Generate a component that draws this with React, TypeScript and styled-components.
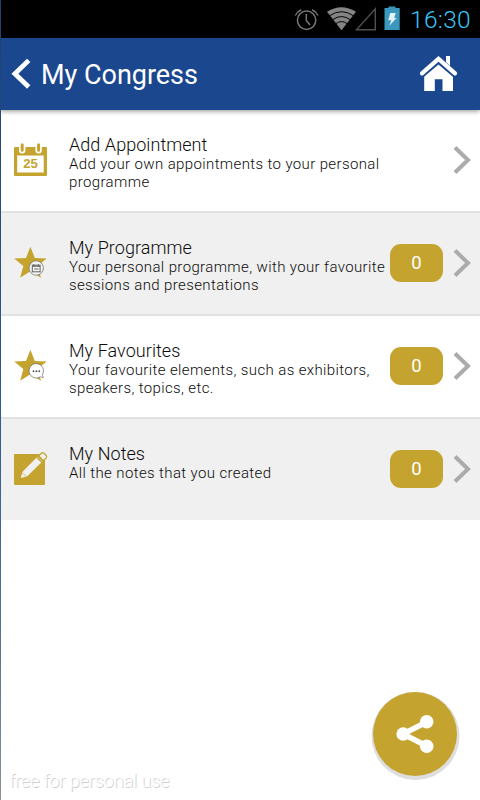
import React from "react";
import styled, { createGlobalStyle } from "styled-components";

const GOLD = "#c4a42e";
const BLUE = "#1b478f";

const GlobalStyle = createGlobalStyle`
  body { margin: 0; background: #fff; }
  * { box-sizing: border-box; }
`;

const Screen = styled.div`
  position: relative;
  width: 480px;
  height: 800px;
  overflow: hidden;
  display: flex;
  flex-direction: column;
  background: #fff;
  font-family: Roboto, "Noto Sans", sans-serif;
  color: #333;
`;

const EdgeLine = styled.div`
  position: absolute;
  left: 0;
  top: 0;
  width: 1px;
  height: 800px;
  background: linear-gradient(#20406f, #2d5a92 50%, #547492 80%, #8a9297);
  z-index: 2;
`;

const StatusBar = styled.div`
  flex: none;
  height: 38px;
  background: #000;
  display: flex;
  justify-content: flex-end;
  padding-right: 9px;
`;

const StatusIcons = styled.svg`
  width: 108px;
  height: 38px;
  margin-right: 8px;
`;

const Clock = styled.span`
  width: 61px;
  font-size: 24.5px;
  font-weight: 300;
  letter-spacing: 0.3px;
  line-height: 40px;
  white-space: nowrap;
  color: #3bc4f5;
`;

const Header = styled.header`
  flex: none;
  height: 72px;
  background: ${BLUE};
  box-shadow: 0 1px 5px rgba(0, 0, 0, 0.45);
  z-index: 1;
  display: flex;
  align-items: center;
  padding: 0 20px 0 11px;
`;

const BackIcon = styled.svg`
  width: 22px;
  height: 34px;
  margin-right: 8px;
`;

const HeaderTitle = styled.h1`
  flex: 1;
  margin: 0;
  font-size: 27px;
  font-weight: 400;
  line-height: 72px;
  padding-top: 2px;
  letter-spacing: -0.02px;
  white-space: nowrap;
  color: #fff;
`;

const HomeIcon = styled.svg`
  width: 42px;
  height: 40px;
`;

const List = styled.main`
  display: flex;
  flex-direction: column;
`;

const Row = styled.div<{ $shaded?: boolean; $last?: boolean }>`
  height: ${(p) => (p.$last ? 101 : 103)}px;
  display: flex;
  background: ${(p) => (p.$shaded ? "#f0f0f0" : "#fff")};
  border-bottom: ${(p) => (p.$last ? "none" : "2px solid #e2e2e2")};
  padding: 24px 8px 0 10px;
`;

const RowIcon = styled.svg`
  flex: none;
  width: 40px;
  height: 50px;
  margin-right: 19px;
`;

const RowText = styled.div`
  flex: none;
  width: 321px;
  white-space: nowrap;
`;

const RowTitle = styled.div`
  font-size: 18px;
  font-weight: 300;
  line-height: 21px;
  letter-spacing: 0.05px;
  color: #0c0c0c;
`;

const RowDescription = styled.div`
  font-size: 15px;
  font-weight: 300;
  line-height: 18px;
  letter-spacing: 0.38px;
  white-space: pre;
  color: #0c0c0c;
`;

const Badge = styled.div<{ $hidden?: boolean }>`
  flex: none;
  width: 53px;
  height: 38px;
  margin-top: 7px;
  border-radius: 11px;
  background: ${GOLD};
  color: #fff;
  font-size: 18.5px;
  line-height: 39px;
  text-align: center;
  visibility: ${(p) => (p.$hidden ? "hidden" : "visible")};
`;

const Chevron = styled.svg`
  flex: none;
  width: 20px;
  height: 30px;
  margin: 11px 0 0 9px;
`;

const ShareButton = styled.button`
  position: absolute;
  left: 373px;
  top: 692px;
  width: 84px;
  height: 84px;
  padding: 0;
  border: 0;
  border-radius: 50%;
  background: ${GOLD};
  box-shadow: 0.5px 2px 0 2px #dedede;
`;

const ShareIcon = styled.svg`
  display: block;
  width: 84px;
  height: 84px;
`;

const Watermark = styled.div`
  position: absolute;
  left: 9px;
  top: 769px;
  font-size: 18.5px;
  font-weight: 300;
  line-height: 24px;
  letter-spacing: -0.32px;
  white-space: nowrap;
  color: #fff;
  text-shadow: 1px 1px 0 #cfcfcf;
`;

const STAR =
  "M20.4 6.8 L24.8 18 L36.7 18.5 L27.5 26 L31 37.8 L20.4 31.2 L10.2 37.8 L13.3 26 L4.2 18.5 L16 18 Z";

const CalendarIcon = () => (
  <RowIcon viewBox="0 0 40 50">
    <path
      fill={GOLD}
      fillRule="evenodd"
      d="M5 13H36Q37 13 37 14V41Q37 42 36 42H5Q4 42 4 41V14Q4 13 5 13ZM7.2 21.5V38.6H33.7V21.5Z"
    />
    <path d="M12.2 11V16.3M28.6 11V16.3" stroke="#fff" strokeWidth="6.4" strokeLinecap="round" />
    <path d="M12.2 10.8V16.3M28.6 10.8V16.3" stroke={GOLD} strokeWidth="3" strokeLinecap="round" />
    <text
      x="20.5"
      y="34.4"
      textAnchor="middle"
      fill={GOLD}
      fontFamily="Liberation Sans, sans-serif"
      fontSize="13.2"
      fontWeight="700"
    >
      25
    </text>
  </RowIcon>
);

const ProgrammeIcon = () => (
  <RowIcon viewBox="0 0 40 50">
    <path d={STAR} transform="translate(0 3)" fill={GOLD} />
    <circle cx="26.2" cy="31" r="7.2" fill="#f5f5f5" stroke="#77736a" strokeWidth="0.8" />
    <rect x="22.3" y="28.2" width="7.8" height="6.6" fill="none" stroke="#60605e" />
    <path d="M24 27V29M28.3 27V29M22.5 29.4H30M24 32H28.5" stroke="#60605e" strokeWidth="0.9" />
  </RowIcon>
);

const FavouritesIcon = () => (
  <RowIcon viewBox="0 0 40 50">
    <path d={STAR} transform="translate(0 3)" fill={GOLD} />
    <path
      d="M30.4 36.7A7.2 7.2 0 1 1 32.6 34.2Q31.8 35.8 33.4 37.3Q31.5 37.8 30.4 36.7Z"
      fill="#fff"
      stroke="#77736a"
      strokeWidth="0.8"
    />
    <g fill="#555">
      <circle cx="23.5" cy="31.2" r="0.95" />
      <circle cx="26.4" cy="31.2" r="0.95" />
      <circle cx="29.3" cy="31.2" r="0.95" />
    </g>
  </RowIcon>
);

const NotesIcon = () => (
  <RowIcon viewBox="0 0 40 50">
    <rect x="4" y="11" width="31" height="31" rx="1" fill={GOLD} />
    <path d="M10.8 35L12.3 28.9L27.6 13.6L32.4 18.4L17 33.6Z" fill="#f0f0f0" />
    <path d="M26.3 13.7L32.2 19.7" stroke={GOLD} strokeWidth="1.3" />
    <path d="M12.2 29.6L16.4 33.8" stroke={GOLD} strokeWidth="0.7" />
    <path
      d="M28.7 12.8L31.4 10.2Q32.6 9.2 33.9 10.3L36.2 12.5Q37.2 13.7 36.1 15L33.4 17.6Z"
      fill="#f0f0f0"
      stroke={GOLD}
      strokeWidth="1.2"
    />
  </RowIcon>
);

const rows = [
  {
    Icon: CalendarIcon,
    title: "Add Appointment",
    description: "Add your own appointments to your personal\nprogramme",
  },
  {
    Icon: ProgrammeIcon,
    title: "My Programme",
    description: "Your personal programme, with your favourite\nsessions and presentations",
    count: 0,
  },
  {
    Icon: FavouritesIcon,
    title: "My Favourites",
    description: "Your favourite elements, such as exhibitors,\nspeakers, topics, etc.",
    count: 0,
  },
  {
    Icon: NotesIcon,
    title: "My Notes",
    description: "All the notes that you created",
    count: 0,
  },
];

export default function App() {
  return (
    <Screen>
      <GlobalStyle />
      <StatusBar>
        <StatusIcons viewBox="294 0 108 38">
          <g fill="none" stroke="#777" strokeWidth="1.5">
            <circle cx="306.6" cy="20.3" r="9.2" />
            <path d="M306.3 14V20.5L310 25" />
            <path d="M295.3 15.5Q297.2 11.5 301.3 9.8M318 15.5Q316 11.5 312 9.8" />
          </g>
          <path d="M341.5 30.3L327 11.8Q341.5 2.8 356 11.8Z" fill="#858585" />
          <g fill="none" stroke="#000" strokeWidth="1">
            <path d="M329.5 15.8Q341.5 7.6 353.5 15.8" />
            <path d="M332.5 19.8Q341.5 13.3 350.5 19.8" />
            <path d="M335.7 23.8Q341.5 19.3 347.3 23.8" />
          </g>
          <path d="M356.5 29.8H375.3V8.8Z" fill="none" stroke="#505050" strokeWidth="1.4" />
          <path d="M384.5 8H388.5V6.5H395.5V8H399.7V30H384.5Z" fill="#3a98bf" />
          <path d="M390.3 13H395.7L394.2 18H396.5L389.4 25.7L391.3 20.2H388.2Z" fill="#e4f2f7" />
        </StatusIcons>
        <Clock>16:30</Clock>
      </StatusBar>
      <Header>
        <BackIcon viewBox="11 57 22 34">
          <path d="M28.7 60.4L14.9 73.8L28.7 87" fill="none" stroke="#fff" strokeWidth="4.8" />
        </BackIcon>
        <HeaderTitle>My Congress</HeaderTitle>
        <HomeIcon viewBox="418 54 42 40">
          <path d="M446 56H450V66L446 62Z" fill="#fff" />
          <path d="M424.2 75L438.5 62.3L453 75V91H442.5V79.3H434.8V91H424.2Z" fill="#fff" />
          <path d="M422 75.5L438.5 61.5L455 75.5" fill="none" stroke={BLUE} strokeWidth="4.6" />
          <path
            d="M422 73.3L438.5 58.8L455 73.3"
            fill="none"
            stroke="#fff"
            strokeWidth="4.2"
            strokeLinecap="round"
          />
        </HomeIcon>
      </Header>
      <List>
        {rows.map(({ Icon, title, description, count }, i) => (
          <Row key={title} $shaded={i % 2 === 1} $last={i === rows.length - 1}>
            <Icon />
            <RowText>
              <RowTitle>{title}</RowTitle>
              <RowDescription>{description}</RowDescription>
            </RowText>
            <Badge $hidden={count === undefined}>{count}</Badge>
            <Chevron viewBox="0 0 20 30">
              <path d="M3 2.5L16 15L3 27.5" fill="none" stroke="#a9abad" strokeWidth="4" />
            </Chevron>
          </Row>
        ))}
      </List>
      <ShareButton aria-label="Share">
        <ShareIcon viewBox="373 692 84 84">
          <path d="M426.7 722L403 734L426.7 746" fill="none" stroke="#fff" strokeWidth="5.4" />
          <g fill="#fff">
            <circle cx="403.2" cy="734" r="6.8" />
            <circle cx="426.7" cy="721.8" r="6.8" />
            <circle cx="426.7" cy="746.2" r="6.8" />
          </g>
        </ShareIcon>
      </ShareButton>
      <Watermark>free for personal use</Watermark>
      <EdgeLine />
    </Screen>
  );
}
